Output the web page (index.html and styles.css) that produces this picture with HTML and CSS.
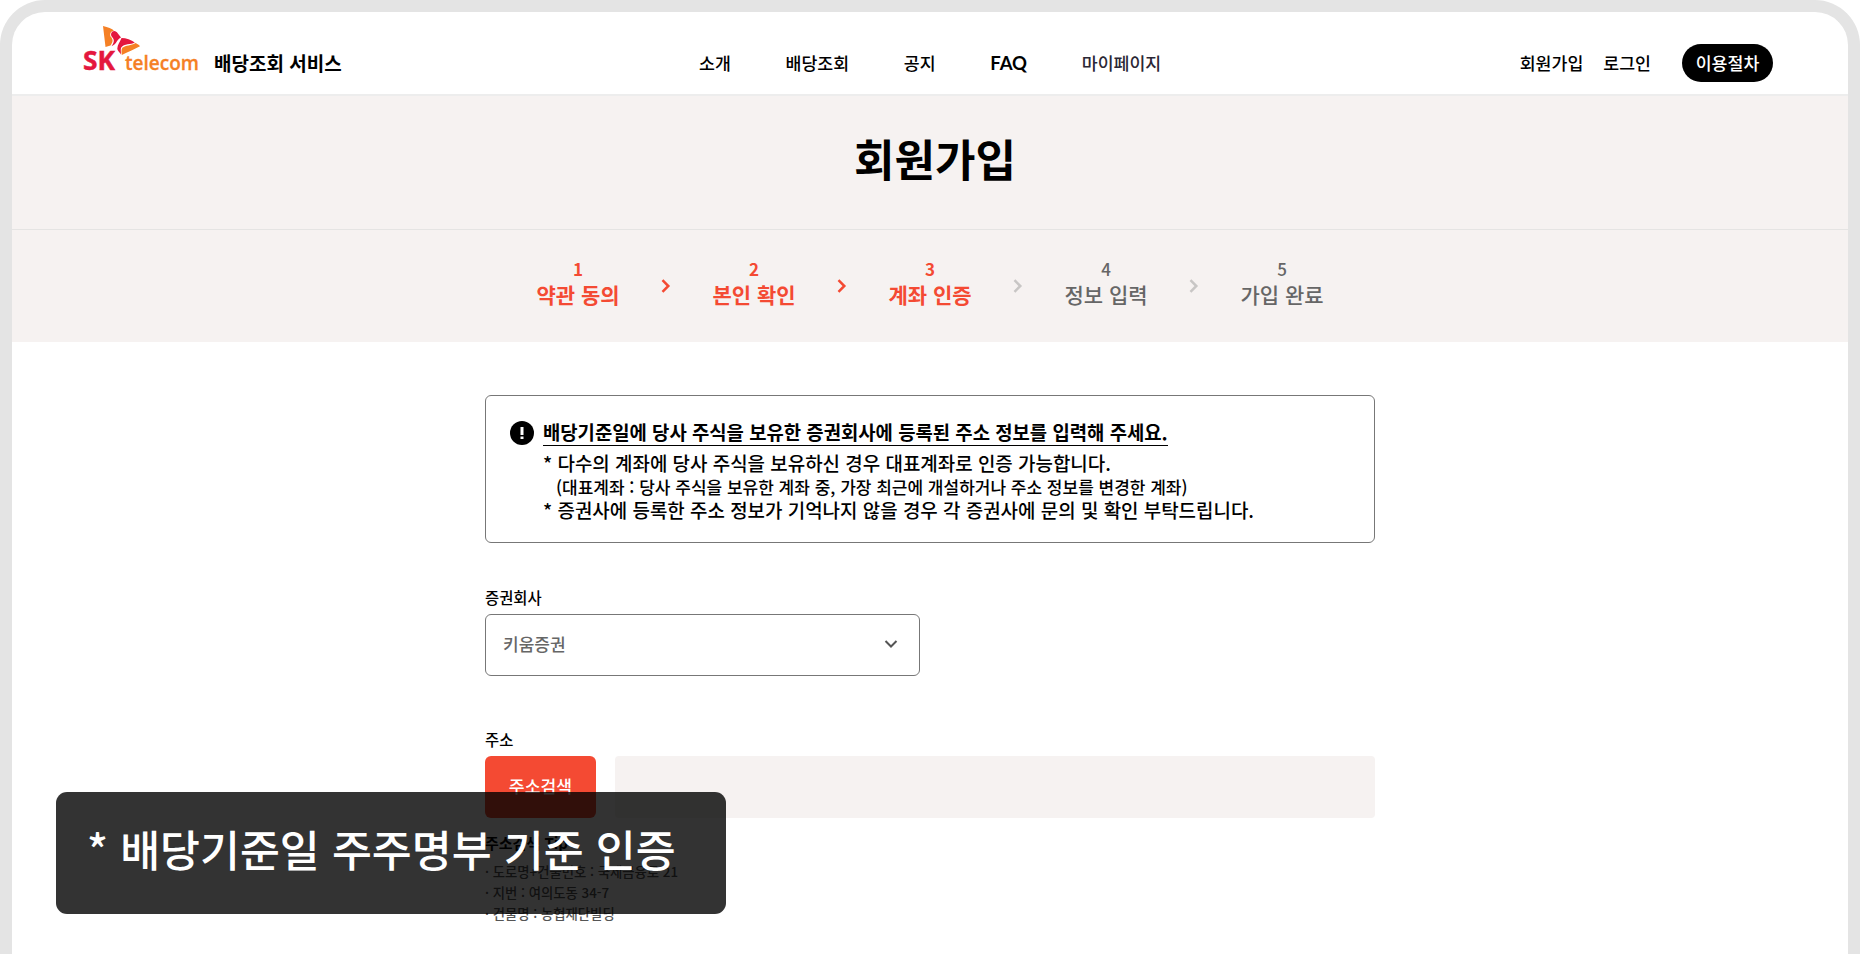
FILE: index.html
```
<!DOCTYPE html>
<html lang="ko">
<head>
    <meta charset="UTF-8">
    <meta name="viewport" content="width=device-width, initial-scale=1.0">
    <title>회원가입 - 배당조회 서비스</title>
    <link rel="stylesheet" href="styles.css">
</head>
<body>
    <div class="frame">
        <header class="header">
            <a class="brand">
                <svg class="logo" width="120" height="56" viewBox="0 0 120 56">
                    <path fill="#f58025" d="M20 0C25 1 29 3 31 4.600C27.500 5.500 26.800 8 27.500 10.500C30.500 13.500 30 16 27.500 19.500L22.500 21Z"/>
                    <path fill="#e4173e" d="M31.300 5C34 5.200 35.500 8.500 38 11.500C34 13 34 18 28.500 20.300C31 16.500 32 14 29 11C27 8.500 28.500 5 31.300 5Z"/>
                    <path fill="#e4173e" d="M38.500 12C43 12 48.500 14 51.800 16.500C48 18.800 41 17.500 38.200 21.500C37.200 23.500 38.300 26 37.800 28.500C36 25 34.500 25 34.300 22.500C34.500 18.500 37 16 38.500 12Z"/>
                    <path fill="#f58025" d="M39.300 21.800C43 19 48 20 52.500 17C54.500 18 56 19 57 20.200C51 23.500 45 26 38.800 29C38.400 26.500 38.300 23.500 39.300 21.800Z"/>
                    <text class="logo-sk" x="0" y="44" textLength="32" lengthAdjust="spacingAndGlyphs">SK</text>
                    <text class="logo-tel" x="42" y="44" textLength="74" lengthAdjust="spacingAndGlyphs">telecom</text>
                </svg>
                <span class="service">배당조회 서비스</span>
            </a>
            <nav class="nav">
                <a>소개</a>
                <a>배당조회</a>
                <a>공지</a>
                <a class="faq">FAQ</a>
                <a class="mypage">마이페이지</a>
            </nav>
            <div class="util">
                <a>회원가입</a>
                <a>로그인</a>
                <a class="pill">이용절차</a>
            </div>
        </header>

        <section class="title-area">
            <h1>회원가입</h1>
        </section>

        <ol class="steps">
            <li class="step on"><span class="num">1</span><span class="name">약관 동의</span></li>
            <li class="arrow on"><svg width="10" height="14" viewBox="0 0 10 14"><path d="M1.500 1.200L7.300 7 1.500 12.800"/></svg></li>
            <li class="step on"><span class="num">2</span><span class="name">본인 확인</span></li>
            <li class="arrow on"><svg width="10" height="14" viewBox="0 0 10 14"><path d="M1.500 1.200L7.300 7 1.500 12.800"/></svg></li>
            <li class="step on"><span class="num">3</span><span class="name">계좌 인증</span></li>
            <li class="arrow"><svg width="10" height="14" viewBox="0 0 10 14"><path d="M1.500 1.200L7.300 7 1.500 12.800"/></svg></li>
            <li class="step"><span class="num">4</span><span class="name">정보 입력</span></li>
            <li class="arrow"><svg width="10" height="14" viewBox="0 0 10 14"><path d="M1.500 1.200L7.300 7 1.500 12.800"/></svg></li>
            <li class="step"><span class="num">5</span><span class="name">가입 완료</span></li>
        </ol>

        <main class="content">
            <div class="notice">
                <svg class="notice-icon" width="24" height="24" viewBox="0 0 24 24">
                    <circle cx="12" cy="12" r="12"/>
                    <path d="M10.500 6h3v8h-3zM10.500 15.500h3v2.500h-3z" fill="#fff"/>
                </svg>
                <div class="notice-text">
                    <strong>배당기준일에 당사 주식을 보유한 증권회사에 등록된 주소 정보를 입력해 주세요.</strong>
                    <p class="line2">* 다수의 계좌에 당사 주식을 보유하신 경우 대표계좌로 인증 가능합니다.</p>
                    <p class="small">(대표계좌 : 당사 주식을 보유한 계좌 중, 가장 최근에 개설하거나 주소 정보를 변경한 계좌)</p>
                    <p>* 증권사에 등록한 주소 정보가 기억나지 않을 경우 각 증권사에 문의 및 확인 부탁드립니다.</p>
                </div>
            </div>

            <div class="field">
                <label>증권회사</label>
                <div class="select">
                    <span>키움증권</span>
                    <svg width="14" height="10" viewBox="0 0 14 10"><path d="M1.500 2L7 7.500 12.500 2"/></svg>
                </div>
            </div>

            <div class="field">
                <label>주소</label>
                <div class="address">
                    <button class="search-btn">주소검색</button>
                    <div class="address-input"></div>
                </div>
            </div>

            <div class="tip">
                <h2>주소검색 Tip</h2>
                <ul>
                    <li>· 도로명+건물번호 : 국제금융로 21</li>
                    <li>· 지번 : 여의도동 34-7</li>
                    <li>· 건물명 : 농협재단빌딩</li>
                </ul>
            </div>
        </main>
    </div>

    <div class="caption">* 배당기준일 주주명부 기준 인증</div>
</body>
</html>
```
FILE: styles.css
```
*{
    margin: 0;
    padding: 0;
    box-sizing: border-box;
}
body{
    height: 954px;
    overflow: hidden;
    background-color: #fff;
    color: #000;
    font-family: "Noto Sans CJK KR", sans-serif;
    font-weight: 500;
    white-space: nowrap;
}
ul, ol{
    list-style: none;
}
.frame{
    height: 954px;
    border: 12px solid #e4e4e4;
    border-bottom: none;
    border-radius: 45px 45px 0 0;
    overflow: hidden;
}

/* header */
.header{
    height: 84px;
    display: flex;
    border-bottom: 2px solid #ededed;
    font-size: 17.3px;
    line-height: 38px;
    padding-top: 32px;
}
.brand{
    width: 687px;
    padding-left: 71px;
    display: flex;
}
.logo{
    margin-top: -18px;
    overflow: visible;
}
.logo-sk{
    font: 700 26.5px "Open Sans", sans-serif;
    fill: #e4173e;
    stroke: #e4173e;
    stroke-width: 0.5;
}
.logo-tel{
    font: 600 20.5px "Open Sans", sans-serif;
    fill: #f58025;
    stroke: #f58025;
    stroke-width: 0.3;
}
.service{
    margin-left: 11px;
    font-size: 19px;
    font-weight: 700;
}
.nav{
    display: flex;
    gap: 54.7px;
}
.faq{
    font-family: Lato, sans-serif;
    font-size: 18.5px;
    font-weight: 700;
}
.mypage{
    color: #2b2735;
}
.util{
    display: flex;
    margin-left: auto;
    margin-right: 75px;
    gap: 20px;
}
.pill{
    width: 91px;
    height: 38px;
    margin-left: 11px;
    border-radius: 19px;
    background-color: #000;
    color: #fff;
    text-align: center;
}

/* title + steps */
.title-area{
    height: 134px;
    background-color: #f6f2f1;
    border-bottom: 1px solid #e5e4e3;
}
.title-area h1{
    padding-left: 10px;
    font-size: 44px;
    line-height: 125px;
    text-align: center;
}
.steps{
    height: 112px;
    padding-top: 27px;
    display: flex;
    justify-content: center;
    background-color: #f6f2f1;
    color: #666;
}
.step{
    width: 90px;
    display: flex;
    flex-direction: column;
    align-items: center;
}
.num{
    font-size: 17px;
    line-height: 24px;
}
.name{
    font-size: 21px;
    line-height: 26px;
}
.step.on{
    color: #f44a33;
    font-weight: 700;
}
.arrow{
    width: 86px;
    padding-top: 22px;
    text-align: center;
    line-height: 0;
}
.arrow path{
    fill: none;
    stroke: #c8c6c5;
    stroke-width: 2.5;
}
.arrow.on path{
    stroke: #f44a33;
}

/* content */
.content{
    width: 890px;
    margin: 0 auto;
    padding-top: 53px;
}
.notice{
    height: 148px;
    padding: 25px 24px 0;
    display: flex;
    gap: 9px;
    border: 1px solid #777;
    border-radius: 6px;
}
.notice-text{
    font-size: 18.95px;
    line-height: 24px;
}
.notice-text strong{
    display: block;
    width: fit-content;
    height: 25px;
    border-bottom: 1px solid #000;
    font-size: 18.82px;
    line-height: 22px;
}
.line2{
    margin-top: 5px;
}
.notice-text .small{
    padding-left: 13px;
    font-size: 17px;
    line-height: 23px;
}
.field{
    margin-top: 44px;
}
.field label{
    display: block;
    font-size: 15.4px;
    line-height: 20px;
}
.select{
    width: 435px;
    height: 62px;
    margin-top: 7px;
    padding: 0 21px 3px 17px;
    display: flex;
    justify-content: space-between;
    align-items: center;
    border: 1px solid #777;
    border-radius: 6px;
    color: #666;
    font-size: 17px;
}
.select path{
    fill: none;
    stroke: #555;
    stroke-width: 2;
}
.field + .field{
    margin-top: 53px;
}
.address{
    display: flex;
    gap: 19px;
    margin-top: 7px;
}
.search-btn{
    width: 111px;
    height: 62px;
    padding-bottom: 3px;
    border: none;
    border-radius: 6px;
    background-color: #f44a33;
    color: #fff;
    font: inherit;
    font-size: 17.2px;
}
.address-input{
    flex: 1;
    height: 62px;
    border-radius: 4px;
    background-color: #f6f2f1;
}
.tip{
    margin-top: 14px;
    font-size: 13.35px;
    line-height: 21px;
    color: #555;
}
.tip h2{
    margin-bottom: 7px;
    font-size: 15px;
    line-height: 22px;
    color: #000;
}

/* caption laid over the page */
.caption{
    position: absolute;
    left: 56px;
    top: 792px;
    width: 670px;
    height: 122px;
    padding-left: 31px;
    border-radius: 11px;
    background-color: rgba(0, 0, 0, 0.8);
    color: #fff;
    font-size: 43.4px;
    line-height: 113px;
}
```
